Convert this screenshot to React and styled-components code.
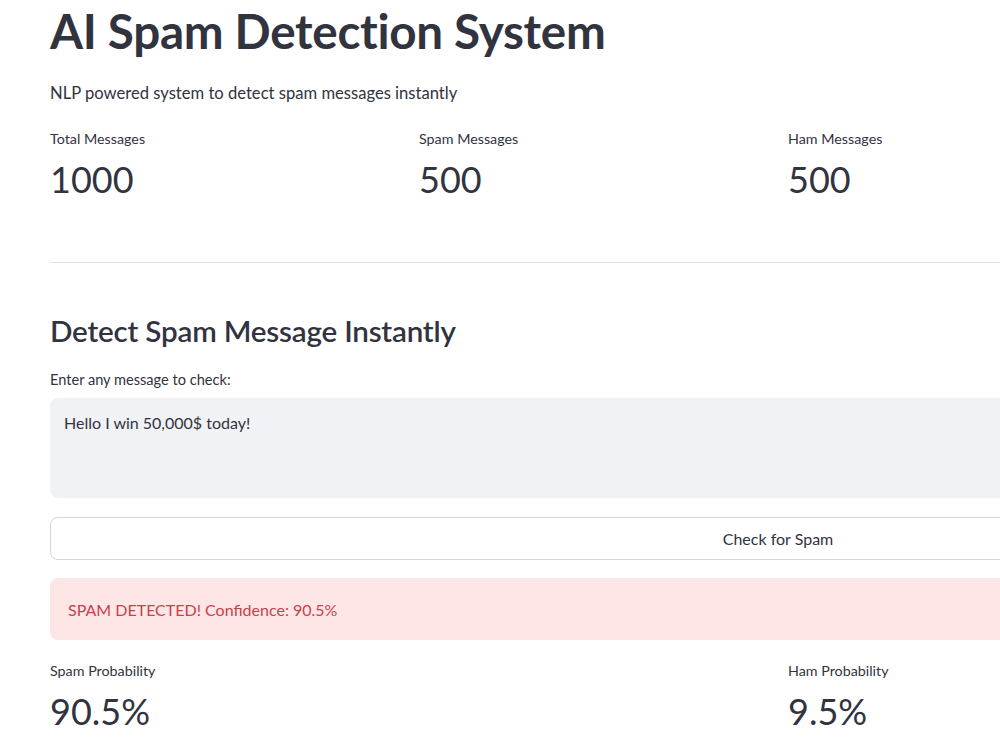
import React, { useState } from "react";
import styled, { createGlobalStyle } from "styled-components";

const GlobalStyle = createGlobalStyle`
  html, body {
    margin: 0;
    padding: 0;
    background: #ffffff;
    overflow: hidden;
  }
  body {
    font-family: Lato, "Noto Sans", sans-serif;
    color: #31333f;
  }
`;

const stats = [
  { label: "Total Messages", value: "1000" },
  { label: "Spam Messages", value: "500" },
  { label: "Ham Messages", value: "500" },
];

function App() {
  const [message, setMessage] = useState("Hello I win 50,000$ today!");

  return (
    <>
      <GlobalStyle />
      <S.Main>
        <S.Title>AI Spam Detection System</S.Title>
        <S.Subtitle>NLP powered system to detect spam messages instantly</S.Subtitle>

        <S.Columns>
          {stats.map((s) => (
            <S.Metric key={s.label}>
              <S.MetricLabel>{s.label}</S.MetricLabel>
              <S.MetricValue>{s.value}</S.MetricValue>
            </S.Metric>
          ))}
        </S.Columns>

        <S.Divider />

        <S.Heading>Detect Spam Message Instantly</S.Heading>
        <S.FieldLabel htmlFor="msg">Enter any message to check:</S.FieldLabel>
        <S.TextArea
          id="msg"
          value={message}
          onChange={(e) => setMessage(e.target.value)}
        />
        <S.Button type="button">Check for Spam</S.Button>

        <S.Alert>SPAM DETECTED! Confidence: 90.5%</S.Alert>

        <S.Columns $top={20}>
          <S.Metric>
            <S.MetricLabel>Spam Probability</S.MetricLabel>
            <S.MetricValue>90.5%</S.MetricValue>
          </S.Metric>
          <S.Metric $col={3}>
            <S.MetricLabel>Ham Probability</S.MetricLabel>
            <S.MetricValue>9.5%</S.MetricValue>
          </S.Metric>
        </S.Columns>
      </S.Main>
    </>
  );
}

// S는 Streamlit 스타일
const S = {
  Main: styled.main`
    width: 1456px;
    padding: 0 0 0 50px;
  `,
  Title: styled.h1`
    margin: 0;
    font-size: 47.6px;
    line-height: 62px;
    font-weight: 700;
    letter-spacing: -0.3px;
    color: #31333f;
  `,
  Subtitle: styled.p`
    margin: 19px 0 0;
    font-size: 16.6px;
    line-height: 24px;
  `,
  Columns: styled.div`
    display: grid;
    grid-template-columns: repeat(3, 353px);
    column-gap: 16px;
    margin-top: ${(p) => p.$top ?? 23}px;
  `,
  Metric: styled.div`
    grid-column: ${(p) => p.$col ?? "auto"};
    display: flex;
    flex-direction: column;
  `,
  MetricLabel: styled.div`
    font-size: 14.3px;
    line-height: 22px;
  `,
  MetricValue: styled.div`
    margin-top: 7px;
    font-size: 36px;
    line-height: 44px;
    font-weight: 400;
  `,
  Divider: styled.hr`
    margin: 61px 0 0;
    width: 100%;
    height: 1px;
    border: none;
    background: #e2e2e4;
  `,
  Heading: styled.h2`
    margin: 45px 0 0;
    font-size: 29.6px;
    line-height: 46px;
    font-weight: 600;
    letter-spacing: -0.2px;
  `,
  FieldLabel: styled.label`
    display: block;
    margin-top: 16px;
    font-size: 14.6px;
    line-height: 20px;
  `,
  TextArea: styled.textarea`
    display: block;
    box-sizing: border-box;
    width: 100%;
    height: 100px;
    margin-top: 8px;
    padding: 13px 14px;
    border: none;
    border-radius: 8px;
    background: #f0f2f6;
    font-family: inherit;
    font-size: 16px;
    line-height: 24px;
    color: #31333f;
    resize: none;
    outline: none;
  `,
  Button: styled.button`
    display: block;
    box-sizing: border-box;
    width: 100%;
    height: 43px;
    margin-top: 19px;
    border: 1px solid #d6d6d9;
    border-radius: 8px;
    background: #ffffff;
    font-family: inherit;
    font-size: 16px;
    color: #31333f;
    cursor: pointer;
  `,
  Alert: styled.div`
    display: flex;
    align-items: center;
    box-sizing: border-box;
    height: 62px;
    margin-top: 18px;
    padding: 0 18px;
    border-radius: 8px;
    background: #ffe6e6;
    color: #c8414a;
    font-size: 16px;
  `,
};

export default App;
